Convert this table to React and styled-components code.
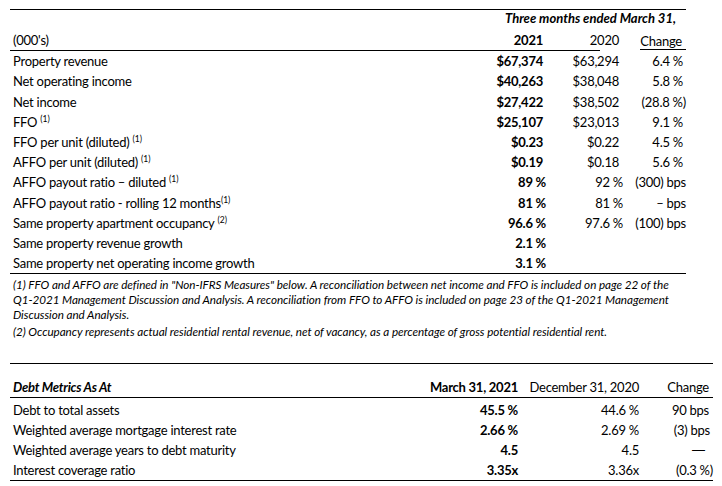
import React from 'react';
import styled, { createGlobalStyle } from 'styled-components';

const GlobalStyle = createGlobalStyle`
    html, body {
        margin: 0;
        padding: 0;
        background: #fff;
    }
    body {
        font-family: Lato, "Liberation Sans", sans-serif;
        color: #000;
    }
`;

const Page = styled.div`
    width: 722px;
    height: 486px;
    padding: 9px 0 0 10px;
    box-sizing: border-box;
    overflow: hidden;
`;

const Table = styled.div`
    width: ${p => p.$width}px;
    border-top: 1px solid #000;
    border-bottom: 1px solid #000;
    font-size: 13px;
    letter-spacing: -0.25px;
`;

const Row = styled.div`
    display: grid;
    grid-template-columns: ${p => p.$cols};
    height: ${p => p.$height || 20.2}px;
    align-items: end;
    box-sizing: border-box;
    border-bottom: ${p => (p.$ruled ? '1px solid #000' : 'none')};
`;

const Cell = styled.div`
    padding: 0 ${p => p.$pad || 0}px 2px ${p => (p.$label ? 3 : 0)}px;
    text-align: ${p => (p.$label ? 'left' : 'right')};
    font-weight: ${p => (p.$bold ? 700 : 400)};
    font-style: ${p => (p.$italic ? 'italic' : 'normal')};
    white-space: nowrap;
    line-height: 16px;
    grid-column: ${p => p.$span || 'auto'};
`;

const Caption = styled(Cell)`
    letter-spacing: 0;
`;

const HeadRule = styled.div`
    width: ${p => p.$width}px;
    border-top: 1px solid #000;
`;

const Underlined = styled.span`
    display: inline-block;
    border-bottom: 1px solid #000;
    padding-right: 4px;
    margin-right: -4px;
    line-height: 15px;
`;

const Sup = styled.sup`
    font-size: 8.5px;
    vertical-align: 5px;
    line-height: 0;
    letter-spacing: 0;
    margin-left: ${p => (p.$tight ? 0 : 3)}px;
`;

const Dash = styled.span`
    font-family: "Liberation Sans", sans-serif;
    letter-spacing: 0;
`;

const Notes = styled.div`
    width: 700px;
    padding: 3px 0 0 3px;
    font-style: italic;
    font-size: 11.7px;
    line-height: 15px;
    letter-spacing: -0.05px;
`;

const Note = styled.p`
    margin: 0 0 2px;
    white-space: nowrap;
`;

const Spacer = styled.div`
    height: ${p => p.$h}px;
`;

const SUMMARY_COLS = '456px 80px 77px 63px';
const DEBT_COLS = '388px 120px 121px 74px';

const summary = [
    { label: 'Property revenue', a: '$67,374', b: '$63,294', c: '6.4 %', money: true },
    { label: 'Net operating income', a: '$40,263', b: '$38,048', c: '5.8 %', money: true },
    { label: 'Net income', a: '$27,422', b: '$38,502', c: '(28.8 %)', money: true },
    { label: 'FFO', note: '(1)', a: '$25,107', b: '$23,013', c: '9.1 %', money: true },
    { label: 'FFO per unit (diluted)', note: '(1)', a: '$0.23', b: '$0.22', c: '4.5 %', money: true },
    { label: 'AFFO per unit (diluted)', note: '(1)', a: '$0.19', b: '$0.18', c: '5.6 %', money: true },
    { label: 'AFFO payout ratio \u2013 diluted', note: '(1)', a: '89 %', b: '92 %', c: '(300) bps' },
    { label: 'AFFO payout ratio - rolling 12 months', note: '(1)', tight: true, a: '81 %', b: '81 %', c: '\u2013 bps' },
    { label: 'Same property apartment occupancy', note: '(2)', a: '96.6 %', b: '97.6 %', c: '(100) bps' },
    { label: 'Same property revenue growth', a: '2.1 %', b: '', c: '' },
    { label: 'Same property net operating income growth', a: '3.1 %', b: '', c: '' },
];

const debt = [
    { label: 'Debt to total assets', a: '45.5 %', b: '44.6 %', c: '90 bps', pad: 4 },
    { label: 'Weighted average mortgage interest rate', a: '2.66 %', b: '2.69 %', c: '(3) bps', pad: 3 },
    { label: 'Weighted average years to debt maturity', a: '4.5', b: '4.5', c: null, pad: 8 },
    { label: 'Interest coverage ratio', a: '3.35x', b: '3.36x', c: '(0.3 %)', pad: 0 },
];

const changePad = v => (v.startsWith('(') || v.includes('bps') ? 0 : 3);

function SummaryTable() {
    return (
        <Table $width={676}>
            <Row $cols={SUMMARY_COLS} $height={18}>
                <Caption $span="2 / 5" $bold $italic $pad={10}>Three months ended March 31,</Caption>
            </Row>
            <Row $cols={SUMMARY_COLS} $height={22}>
                <Cell $label>(000's)</Cell>
                <Cell $bold $pad={3}>2021</Cell>
                <Cell $pad={4}>2020</Cell>
                <Cell $pad={4} style={{ paddingBottom: 0 }}>
                    <Underlined>Change</Underlined>
                </Cell>
            </Row>
            <HeadRule $width={590} />
            {summary.map(r => (
                <Row key={r.label} $cols={SUMMARY_COLS}>
                    <Cell $label>
                        {r.label}
                        {r.note && <Sup $tight={r.tight}>{r.note}</Sup>}
                    </Cell>
                    <Cell $bold $pad={r.money ? 3 : 0}>{r.a}</Cell>
                    <Cell $pad={r.money ? 4 : 0}>{r.b}</Cell>
                    <Cell $pad={changePad(r.c)}>{r.c}</Cell>
                </Row>
            ))}
        </Table>
    );
}

function DebtTable() {
    return (
        <Table $width={703}>
            <Row $cols={DEBT_COLS} $height={34} $ruled>
                <Cell $label $bold $italic>Debt Metrics As At</Cell>
                <Cell $bold>March 31, 2021</Cell>
                <Cell>December 31, 2020</Cell>
                <Cell $pad={4}>Change</Cell>
            </Row>
            {debt.map((r, i) => (
                <Row key={r.label} $cols={DEBT_COLS} $height={i === 0 ? 22 : 20}>
                    <Cell $label>{r.label}</Cell>
                    <Cell $bold>{r.a}</Cell>
                    <Cell>{r.b}</Cell>
                    <Cell $pad={r.pad}>{r.c === null ? <Dash>{'\u2014'}</Dash> : r.c}</Cell>
                </Row>
            ))}
        </Table>
    );
}

export default function App() {
    return (
        <Page>
            <GlobalStyle />
            <SummaryTable />
            <Notes>
                <Note>
                    (1) FFO and AFFO are defined in "Non-IFRS Measures" below. A reconciliation between net income and FFO is included on page 22 of the
                    <br />
                    Q1-2021 Management Discussion and Analysis. A reconciliation from FFO to AFFO is included on page 23 of the Q1-2021 Management
                    <br />
                    Discussion and Analysis.
                </Note>
                <Note>
                    (2) Occupancy represents actual residential rental revenue, net of vacancy, as a percentage of gross potential residential rent.
                </Note>
            </Notes>
            <Spacer $h={22} />
            <DebtTable />
        </Page>
    );
}
